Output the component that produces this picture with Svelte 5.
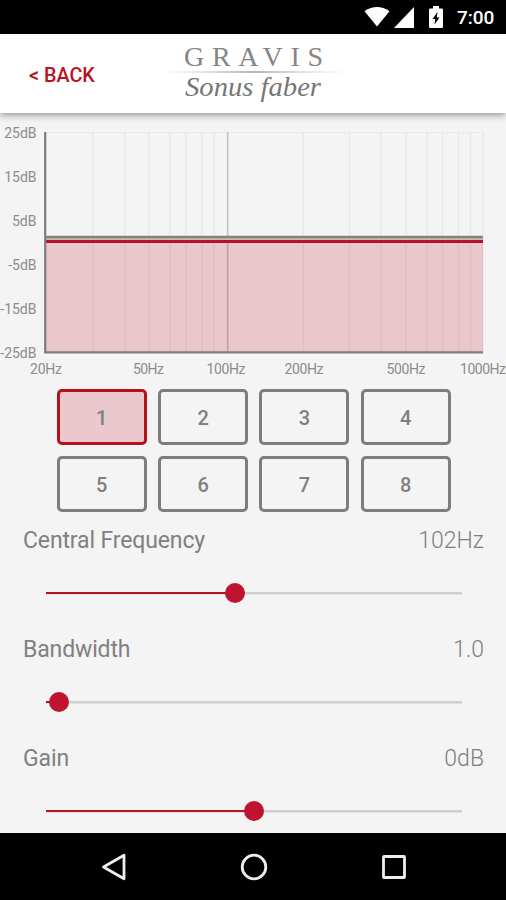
<script lang="ts">
  let activeBand = $state(1);

  const bands = [1, 2, 3, 4, 5, 6, 7, 8];

  const params = [
    { name: 'Central Frequency', value: '102Hz', percent: 45.4 },
    { name: 'Bandwidth', value: '1.0', percent: 3.2 },
    { name: 'Gain', value: '0dB', percent: 49.9 },
  ];

  const dbLabels = ['25dB', '15dB', '5dB', '-5dB', '-15dB', '-25dB'];

  const hzLabels = [
    { x: 46, text: '20Hz', width: 32 },
    { x: 148.5, text: '50Hz', width: 31 },
    { x: 226, text: '100Hz', width: 39 },
    { x: 304, text: '200Hz', width: 39 },
    { x: 406, text: '500Hz', width: 39 },
    { x: 483, text: '1000Hz', width: 46 },
  ];

  // Logarithmic grid, 30Hz to 1000Hz
  const gridLines = [93, 125, 149, 170, 186, 202, 214, 303.5, 349.5, 381, 406, 427, 442.5, 458.5, 470.5, 483];
</script>

<div class="screen">
  <div class="status-bar">
    <svg class="wifi" width="26" height="20" viewBox="0 0 26 20">
      <path d="M13 19.5 0.5 4.2Q13-4.2 25.5 4.2Z" fill="#fff" />
    </svg>
    <svg class="signal" width="20" height="21" viewBox="0 0 20 21">
      <path d="M20 0V21H0Z" fill="#fff" />
    </svg>
    <svg class="battery" width="14" height="22" viewBox="0 0 14 22">
      <path d="M4 0h6v2.5h2.8q1.2 0 1.2 1.2V20.8q0 1.2-1.2 1.2H1.2Q0 22 0 20.8V3.7Q0 2.5 1.2 2.5H4Z" fill="#fff" />
      <path d="M8.5 6 3.5 13H6.2L5.5 18.5 10.5 11.5H7.8Z" fill="#000" />
    </svg>
    <span class="time">7:00</span>
  </div>

  <header>
    <button class="back">&lt; BACK</button>
    <svg class="logo" width="186" height="79" viewBox="0 0 186 79">
      <defs>
        <linearGradient id="rule">
          <stop offset="0" stop-color="#ccc" stop-opacity="0" />
          <stop offset="0.5" stop-color="#b5b5b5" />
          <stop offset="1" stop-color="#ccc" stop-opacity="0" />
        </linearGradient>
      </defs>
      <text class="brand" x="23" y="31.5" textLength="139">GRAVIS</text>
      <rect x="0" y="37" width="186" height="2" fill="url(#rule)" />
      <text class="maker" x="24" y="61.5" textLength="136" lengthAdjust="spacingAndGlyphs">Sonus faber</text>
    </svg>
  </header>

  <main>
    <svg class="chart" width="506" height="276" viewBox="0 113 506 276">
      <path d="M45 132.5H483" stroke="#ebebeb" />
      {#each gridLines as x}
        <path d="M{x} 132V352" stroke="#e8e8e8" stroke-width="1.3" />
      {/each}
      <path d="M227.7 132V352" stroke="#c4c4c4" stroke-width="1.6" />
      <rect x="46" y="241" width="437" height="111" fill="#be1432" fill-opacity="0.2" />
      <path d="M46 239H483" stroke="#c7b9ac" stroke-width="2" />
      <path d="M46 237H483" stroke="#83857a" stroke-width="2.6" />
      <path d="M46 241.6H483" stroke="#b3112e" stroke-width="3" />
      <path d="M45.2 132V352.4H483" fill="none" stroke="#7d7d7a" stroke-width="2.2" />
      {#each dbLabels as label, i}
        <text x="36.5" y={137.5 + i * 44} text-anchor="end">{label}</text>
      {/each}
      {#each hzLabels as label}
        <text x={label.x} y="374" text-anchor="middle" textLength={label.width}>{label.text}</text>
      {/each}
    </svg>

    <div class="bands">
      {#each bands as band}
        <button class="band" class:active={band === activeBand} onclick={() => (activeBand = band)}>{band}</button>
      {/each}
    </div>

    {#each params as param}
      <section class="param">
        <div class="caption">
          <span class="name">{param.name}</span>
          <span class="value">{param.value}</span>
        </div>
        <div class="track">
          <div class="fill" style="width: {param.percent}%"></div>
          <div class="thumb"></div>
        </div>
      </section>
    {/each}
  </main>

  <nav>
    <svg width="26" height="28" viewBox="0 0 26 28">
      <path d="M23 2.2V25.8L2.5 14Z" />
    </svg>
    <svg width="28" height="28" viewBox="0 0 28 28">
      <circle cx="14" cy="14" r="11.8" />
    </svg>
    <svg width="26" height="28" viewBox="0 0 26 28">
      <rect x="2.5" y="3.5" width="21" height="21" rx="0.5" />
    </svg>
  </nav>
</div>

<style>
  :global(body) {
    margin: 0;
  }

  .screen {
    display: flex;
    flex-direction: column;
    width: 506px;
    height: 900px;
    overflow: hidden;
    background: #f4f4f4;
    color: #808080;
    font-family: Roboto, sans-serif;
  }

  svg {
    display: block;
    flex: none;
  }

  button {
    padding: 0;
    border: 0;
    background: none;
    font-family: inherit;
    cursor: pointer;
  }

  .status-bar {
    display: flex;
    flex: none;
    align-items: center;
    justify-content: flex-end;
    box-sizing: border-box;
    height: 34px;
    padding-right: 11px;
    background: #000;
    color: #fff;
  }

  .signal {
    margin-left: 4px;
  }

  .battery {
    margin-left: 15px;
  }

  .time {
    width: 38px;
    margin-left: 14px;
    font-size: 19px;
    font-weight: 500;
    line-height: 34px;
    padding-top: 2px;
    white-space: nowrap;
  }

  header {
    display: flex;
    flex: none;
    height: 79px;
    background: #fff;
    box-shadow: 0 1px 8px rgba(0, 0, 0, 0.5);
    z-index: 1;
  }

  .back {
    width: 68px;
    margin: 3px 0 0 29px;
    color: #b8141e;
    font-size: 19.8px;
    font-weight: 500;
    white-space: nowrap;
    text-align: left;
  }

  .logo {
    margin-left: 64px;
  }

  .logo text {
    font-family: "Liberation Serif", serif;
    fill: #777;
  }

  .logo .brand {
    font-size: 28px;
    fill: #858585;
  }

  .logo .maker {
    font-size: 27px;
    font-style: italic;
  }

  main {
    flex: 1;
    min-height: 0;
  }

  .chart text {
    font-size: 14px;
    fill: #8c8c8c;
  }

  .bands {
    display: grid;
    grid-template-columns: repeat(4, 90px);
    grid-auto-rows: 55.6px;
    gap: 11.9px 11.3px;
    padding: 0 56.8px 0.9px;
  }

  .band {
    padding-top: 2px;
    border: 3px solid #7d7d7d;
    border-radius: 5px;
    color: #808080;
    font-size: 20px;
    font-weight: 500;
  }

  .band.active {
    border-color: #b5101c;
    background: #eac8ce;
  }

  .param {
    height: 109px;
  }

  .caption {
    display: flex;
    justify-content: space-between;
    padding: 14px 22px 0 23px;
    font-size: 23px;
    line-height: 27px;
  }

  .name {
    letter-spacing: -0.13px;
  }

  .value {
    font-weight: 300;
  }

  .track {
    display: flex;
    align-items: center;
    width: 416px;
    height: 20px;
    margin: 29px 0 0 46px;
    background: linear-gradient(#cfcfcf, #cfcfcf) center / 100% 2.5px no-repeat;
  }

  .fill {
    height: 2.5px;
    background: #b5141e;
  }

  .thumb {
    flex: none;
    width: 20px;
    height: 20px;
    margin-left: -10px;
    border-radius: 50%;
    background: #be1431;
  }

  nav {
    display: flex;
    flex: none;
    align-items: center;
    justify-content: space-between;
    box-sizing: border-box;
    height: 67px;
    padding: 0 99px 0 101px;
    background: #000;
    z-index: 1;
  }

  nav svg {
    fill: none;
    stroke: #eee;
    stroke-width: 2.8;
    stroke-linejoin: round;
  }
</style>
